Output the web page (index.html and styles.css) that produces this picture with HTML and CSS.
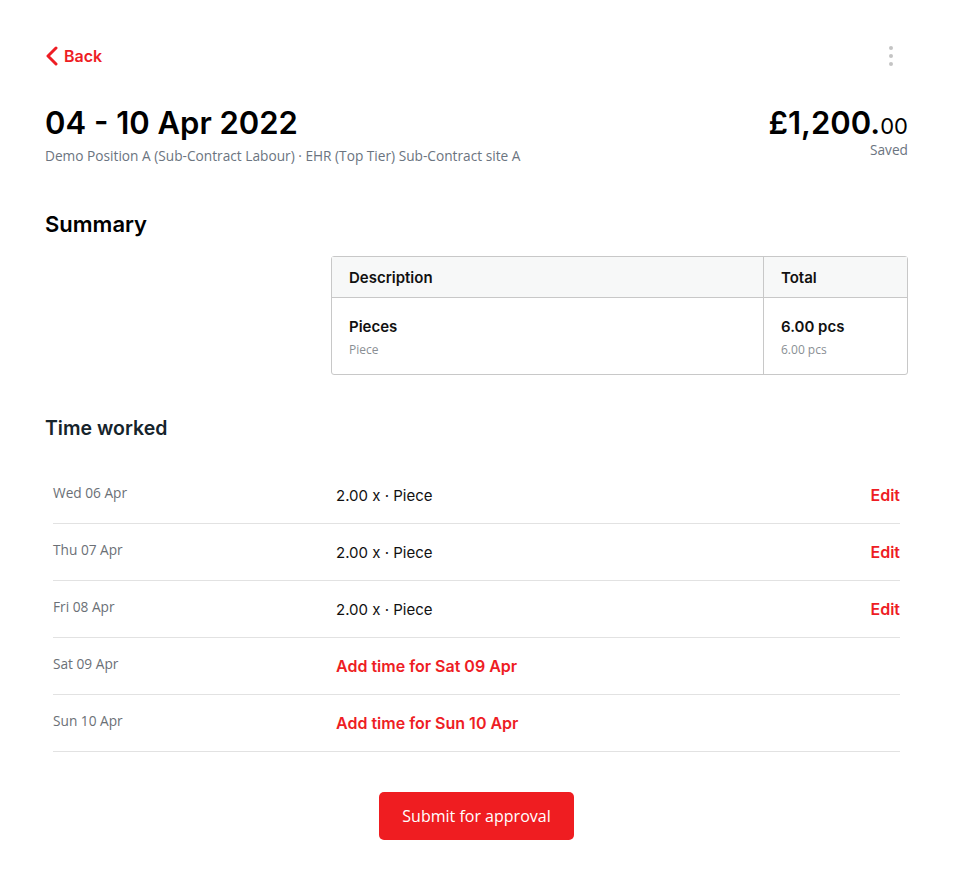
FILE: index.html
```html
<!DOCTYPE html>
<html lang="en">
<head>
  <meta charset="UTF-8" />
  <meta name="viewport" content="width=device-width, initial-scale=1.0"/>
  <title>Timesheet</title>
  <link rel="stylesheet" href="styles.css">
</head>
<body>
  <div class="page">
    <div class="top-bar">
      <a class="back-link" href="#">
        <svg width="14" height="20" viewBox="0 0 14 20"><path d="M11 2 L3 10 L11 18" fill="none" stroke="#ee1d24" stroke-width="3" stroke-linecap="round" stroke-linejoin="round"/></svg>
        <span>Back</span>
      </a>
      <div class="kebab"><span></span><span></span><span></span></div>
    </div>

    <div class="header">
      <div>
        <h1>04 - 10 Apr 2022</h1>
        <div class="sub">Demo Position A (Sub-Contract Labour) · EHR (Top Tier) Sub-Contract site A</div>
      </div>
      <div class="amount">
        <div class="price">£1,200.<small>00</small></div>
        <div class="status">Saved</div>
      </div>
    </div>

    <h2 class="section-title">Summary</h2>
    <div class="summary-wrap">
      <table class="summary">
        <thead>
          <tr><th>Description</th><th class="col-total">Total</th></tr>
        </thead>
        <tbody>
          <tr>
            <td><div class="main">Pieces</div><div class="minor">Piece</div></td>
            <td class="col-total"><div class="main">6.00 pcs</div><div class="minor">6.00 pcs</div></td>
          </tr>
        </tbody>
      </table>
    </div>

    <h3 class="time-title">Time worked</h3>
    <ul class="days">
      <li><span class="day">Wed 06 Apr</span><span class="value">2.00 x · Piece</span><a class="edit" href="#">Edit</a></li>
      <li><span class="day">Thu 07 Apr</span><span class="value">2.00 x · Piece</span><a class="edit" href="#">Edit</a></li>
      <li><span class="day">Fri 08 Apr</span><span class="value">2.00 x · Piece</span><a class="edit" href="#">Edit</a></li>
      <li><span class="day">Sat 09 Apr</span><a class="add" href="#">Add time for Sat 09 Apr</a></li>
      <li><span class="day">Sun 10 Apr</span><a class="add" href="#">Add time for Sun 10 Apr</a></li>
    </ul>

    <div class="actions">
      <button class="submit">Submit for approval</button>
    </div>
  </div>
</body>
</html>
```

FILE: styles.css
```css
body {
  margin: 0;
  background: #ffffff;
  font-family: Inter, "Open Sans", sans-serif;
  color: #111;
}

.page {
  padding: 43px 45px 40px;
}

.top-bar {
  display: flex;
  justify-content: space-between;
  align-items: center;
  height: 26px;
}

.back-link {
  display: flex;
  align-items: center;
  gap: 5px;
  color: #ee1d24;
  text-decoration: none;
  font-weight: 600;
  font-size: 16px;
}

.kebab {
  display: flex;
  flex-direction: column;
  gap: 4px;
  margin-right: 15px;
}

.kebab span {
  width: 4px;
  height: 4px;
  border-radius: 50%;
  background: #c4c4c4;
}

.header {
  display: flex;
  justify-content: space-between;
  align-items: flex-start;
  margin-top: 34px;
}

h1 {
  margin: 0;
  font-size: 31px;
  font-weight: 600;
  line-height: 40px;
  color: #000;
}

.sub {
  font-family: "Open Sans", sans-serif;
  font-size: 13.7px;
  color: #6b7480;
  margin-top: 3px;
}

.amount {
  text-align: right;
}

.price {
  font-size: 31px;
  font-weight: 600;
  line-height: 40px;
  color: #000;
}

.price small {
  font-size: 22px;
  font-weight: 400;
}

.status {
  font-family: "Open Sans", sans-serif;
  font-size: 13.7px;
  color: #6b7480;
  margin-top: -6px;
}

.section-title {
  margin: 44px 0 0;
  font-size: 22px;
  font-weight: 600;
  line-height: 30px;
  color: #000;
}

.summary-wrap {
  display: flex;
  justify-content: flex-end;
  margin-top: 17px;
}

.summary {
  width: 577px;
  border-collapse: separate;
  border-spacing: 0;
  border: 1px solid #c8c8c8;
  border-radius: 3px;
}

.summary th {
  background: #f7f8f8;
  text-align: left;
  font-size: 15px;
  font-weight: 600;
  height: 40px;
  padding: 0 17px;
  border-bottom: 1px solid #c8c8c8;
}

.summary td {
  padding: 19px 17px 16px;
  vertical-align: top;
}

.summary .col-total {
  width: 109px;
  border-left: 1px solid #c8c8c8;
}

.summary .main {
  font-size: 15px;
  font-weight: 600;
}

.summary .minor {
  font-family: "Open Sans", sans-serif;
  font-size: 12px;
  color: #8a8f94;
  margin-top: 5px;
}

.time-title {
  margin: 40px 0 0;
  font-size: 19.5px;
  font-weight: 600;
  color: #16242c;
  line-height: 26px;
}

.days {
  list-style: none;
  margin: 26px 8px 0;
  padding: 0;
}

.days li {
  display: grid;
  grid-template-columns: 283px 1fr auto;
  align-items: center;
  height: 56px;
  border-bottom: 1px solid #e2e2e2;
}

.day {
  font-family: "Open Sans", sans-serif;
  font-size: 13.7px;
  color: #6b7076;
  margin-top: -5px;
}

.value {
  font-size: 15px;
  color: #111;
}

.edit,
.add {
  color: #ee1d24;
  text-decoration: none;
  font-weight: 600;
  font-size: 16px;
}

.actions {
  display: flex;
  justify-content: center;
  margin-top: 40px;
}

.submit {
  background: #ef1d21;
  color: #fff;
  border: none;
  border-radius: 5px;
  width: 195px;
  height: 48px;
  font-family: "Open Sans", sans-serif;
  font-size: 16px;
  cursor: pointer;
}
```
